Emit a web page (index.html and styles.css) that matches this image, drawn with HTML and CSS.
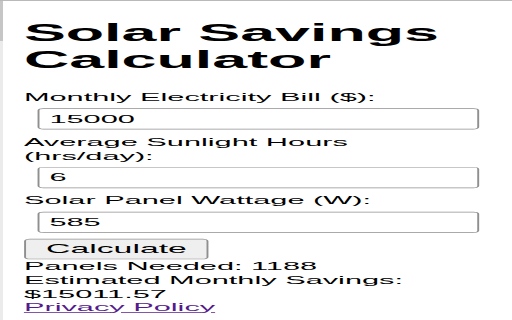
FILE: index.html
```html
<!DOCTYPE html>
<html lang="en">
<head>
<meta charset="utf-8">
<title>Solar Savings Calculator</title>
<link rel="stylesheet" href="styles.css">
</head>
<body>
<div class="frame">
  <div class="edge"></div>
  <div class="viewport">
    <main class="page">
      <h1 class="title">Solar Savings Calculator</h1>
      <label class="field-label" for="bill">Monthly Electricity Bill ($):</label>
      <input class="field-input" id="bill" type="text" value="15000">
      <label class="field-label" for="sun">Average Sunlight Hours (hrs/day):</label>
      <input class="field-input" id="sun" type="text" value="6">
      <label class="field-label" for="watt">Solar Panel Wattage (W):</label>
      <input class="field-input" id="watt" type="text" value="585">
      <button class="calc-btn" type="button">Calculate</button>
      <div class="result">Panels Needed: 1188</div>
      <div class="result">Estimated Monthly Savings: $15011.57</div>
      <a class="policy" href="#">Privacy Policy</a>
    </main>
  </div>
</div>
</body>
</html>
```
FILE: styles.css
```css
html, body {
  margin: 0;
  padding: 0;
  background: #ffffff;
}

.frame {
  display: flex;
  width: 512px;
  height: 320px;
  box-sizing: border-box;
  border-top: 1px solid #b9b9b9;
  overflow: hidden;
}

.edge {
  flex: none;
  width: 3px;
  background: linear-gradient(#c6c6c6 0 40px, #ebebeb 40px);
}

.viewport {
  flex: 1;
  overflow: hidden;
}

.page {
  display: flow-root;
  width: 265.1px;
  height: 436px;
  box-sizing: border-box;
  padding: 0 22px 0 10.9px;
  transform: scale(1.92, 0.734);
  transform-origin: 0 0;
  font-family: "Liberation Sans", Arial, sans-serif;
  font-size: 16px;
  color: #000000;
}

.title {
  margin: 23.6px 0 23.1px;
  font-size: 32.7px;
  font-weight: bold;
  line-height: 37.5px;
}

.field-label {
  display: block;
  line-height: 18.4px;
}

.field-input {
  display: block;
  box-sizing: border-box;
  width: 230.2px;
  height: 29px;
  margin: 6px 0 8px 7.3px;
  padding: 0 5px;
  font-family: "Liberation Sans", Arial, sans-serif;
  font-size: 16px;
  color: #000000;
  background: #ffffff;
  border: 1px solid #8f8f8f;
  border-radius: 3px;
  outline: none;
}

.calc-btn {
  display: block;
  box-sizing: border-box;
  width: 96.4px;
  height: 27.2px;
  margin: 0 0 1.8px 0;
  padding: 0;
  font-family: "Liberation Sans", Arial, sans-serif;
  font-size: 17.6px;
  color: #000000;
  background: #efefef;
  border: 1px solid #8f8f8f;
  border-radius: 3px;
}

.result {
  line-height: 18.4px;
}

.policy {
  line-height: 18.4px;
  color: #551a8b;
  text-decoration: underline;
}
```
